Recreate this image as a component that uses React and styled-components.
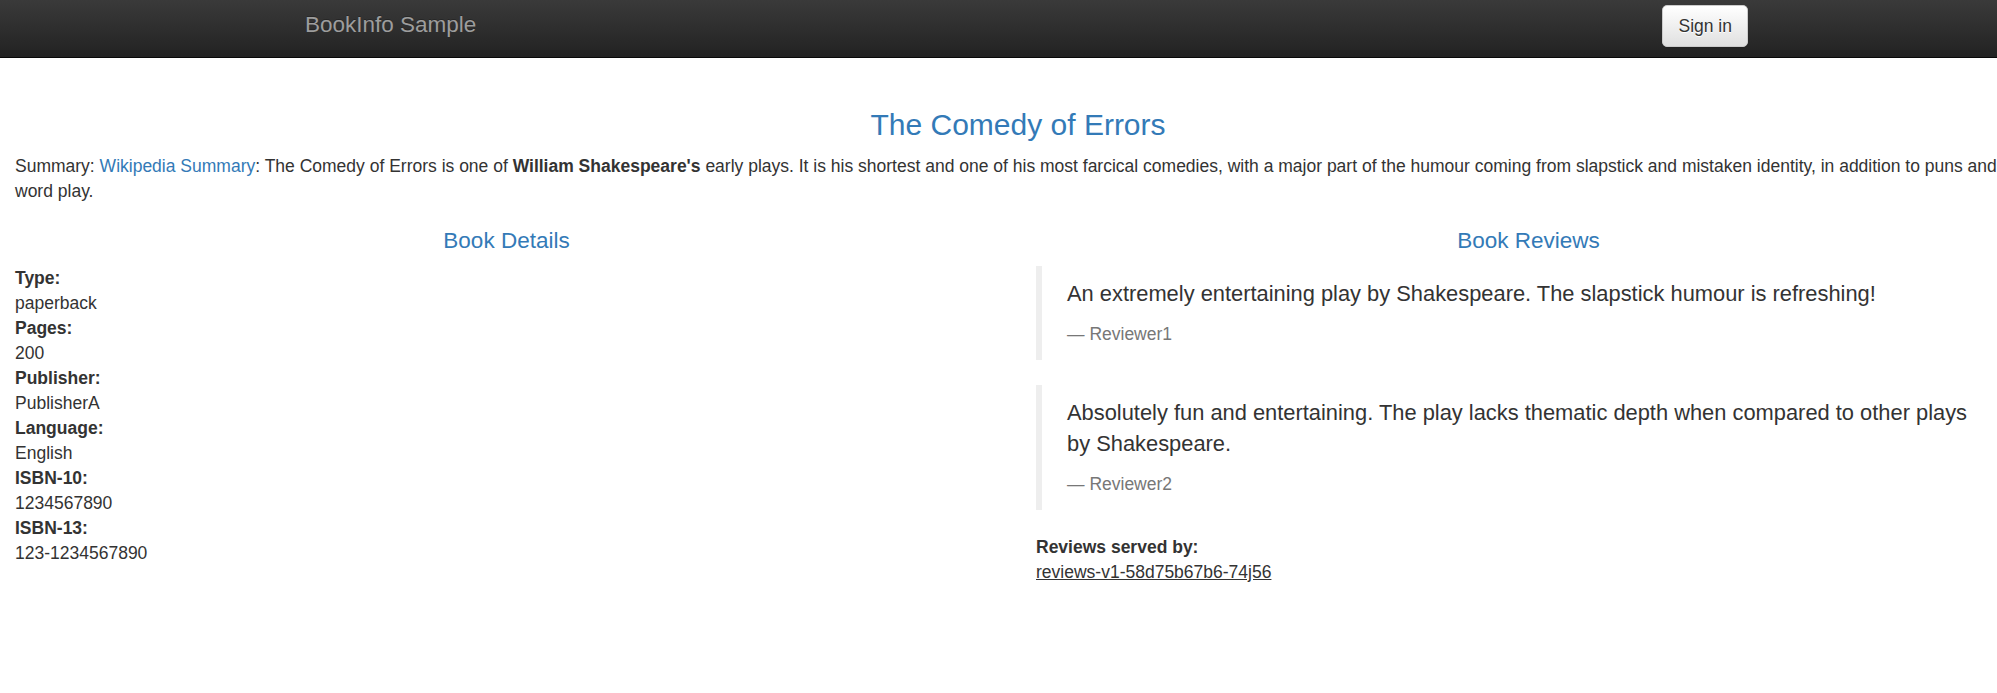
import React from "react";
import styled, { createGlobalStyle } from "styled-components";

const GlobalStyle = createGlobalStyle`
  html, body {
    margin: 0;
    padding: 0;
    overflow-x: hidden;
    background: #fff;
  }
  body {
    font-family: "Liberation Sans", Arial, Helvetica, sans-serif;
    font-size: 17.5px;
    line-height: 25px;
    color: #333;
  }
  * { box-sizing: border-box; }
`;

const Navbar = styled.header`
  display: flex;
  justify-content: space-between;
  align-items: flex-start;
  height: 58px;
  padding: 0 249px 0 305px;
  background-image: linear-gradient(to bottom, #3a3a3a 0%, #222 100%);
  border-bottom: 1px solid #080808;
`;

const Brand = styled.a`
  margin-top: 12px;
  font-size: 22.5px;
  line-height: 25px;
  color: #9d9d9d;
  text-decoration: none;
  text-shadow: 0 -1px 0 rgba(0, 0, 0, 0.25);
`;

const SignInButton = styled.button`
  margin-top: 5px;
  height: 42px;
  padding: 0 15px;
  font-family: inherit;
  font-size: 17.5px;
  line-height: 25px;
  color: #333;
  background-image: linear-gradient(to bottom, #fff 0%, #e0e0e0 100%);
  border: 1px solid #ccc;
  border-radius: 5px;
  text-shadow: 0 1px 0 #fff;
  box-shadow: inset 0 1px 0 rgba(255, 255, 255, 0.15), 0 1px 1px rgba(0, 0, 0, 0.075);
  cursor: pointer;
`;

const Main = styled.main`
  width: 2021px;
  padding: 50px 0 40px 15px;
`;

const Title = styled.h3`
  margin: 0 0 12.5px;
  font-size: 30px;
  line-height: 33px;
  font-weight: 500;
  color: #337ab7;
  text-align: center;
`;

const Summary = styled.p`
  margin: 0 0 12.5px;
`;

const Link = styled.a`
  color: #337ab7;
  text-decoration: none;
`;

const Columns = styled.div`
  display: grid;
  grid-template-columns: 983px 985px;
  column-gap: 38px;
  align-items: start;
`;

const Column = styled.section`
  display: flow-root;
`;

const SectionTitle = styled.h4`
  margin: 12.5px 0 12.5px;
  font-size: 22.5px;
  line-height: 24.75px;
  font-weight: 500;
  color: #337ab7;
  text-align: center;
`;

const DetailList = styled.dl`
  margin: 0 0 25px;
`;

const Term = styled.dt`
  font-weight: 700;
`;

const Value = styled.dd`
  margin: 0;
`;

const Review = styled.blockquote`
  margin: 0 0 25px;
  padding: 12.5px 40px 12.5px 25px;
  border-left: 6.25px solid #eee;
  font-size: 21.875px;
  line-height: 31.25px;
`;

const ReviewText = styled.p`
  margin: 0 0 12.5px;
`;

const Reviewer = styled.small`
  display: block;
  font-size: 17.5px;
  line-height: 25px;
  color: #777;
  &::before {
    content: "\\2014 \\00A0";
  }
`;

const ServedLink = styled.u`
  color: #333;
`;

const details = [
  ["Type:", "paperback"],
  ["Pages:", "200"],
  ["Publisher:", "PublisherA"],
  ["Language:", "English"],
  ["ISBN-10:", "1234567890"],
  ["ISBN-13:", "123-1234567890"],
];

const reviews = [
  {
    text: "An extremely entertaining play by Shakespeare. The slapstick humour is refreshing!",
    by: "Reviewer1",
  },
  {
    text: "Absolutely fun and entertaining. The play lacks thematic depth when compared to other plays by Shakespeare.",
    by: "Reviewer2",
  },
];

export default function App() {
  return (
    <>
      <GlobalStyle />
      <Navbar>
        <Brand href="#">BookInfo Sample</Brand>
        <SignInButton type="button">Sign in</SignInButton>
      </Navbar>
      <Main>
        <Title>The Comedy of Errors</Title>
        <Summary>
          Summary: <Link href="#">Wikipedia Summary</Link>: The Comedy of Errors is one of{" "}
          <b>William Shakespeare's</b> early plays. It is his shortest and one of his most farcical
          comedies, with a major part of the humour coming from slapstick and mistaken identity, in
          addition to puns and word play.
        </Summary>
        <Columns>
          <Column>
            <SectionTitle>Book Details</SectionTitle>
            <DetailList>
              {details.map(([k, v]) => (
                <React.Fragment key={k}>
                  <Term>{k}</Term>
                  <Value>{v}</Value>
                </React.Fragment>
              ))}
            </DetailList>
          </Column>
          <Column>
            <SectionTitle>Book Reviews</SectionTitle>
            {reviews.map((r) => (
              <Review key={r.by}>
                <ReviewText>{r.text}</ReviewText>
                <Reviewer>{r.by}</Reviewer>
              </Review>
            ))}
            <DetailList>
              <Term>Reviews served by:</Term>
              <Value>
                <ServedLink>reviews-v1-58d75b67b6-74j56</ServedLink>
              </Value>
            </DetailList>
          </Column>
        </Columns>
      </Main>
    </>
  );
}
